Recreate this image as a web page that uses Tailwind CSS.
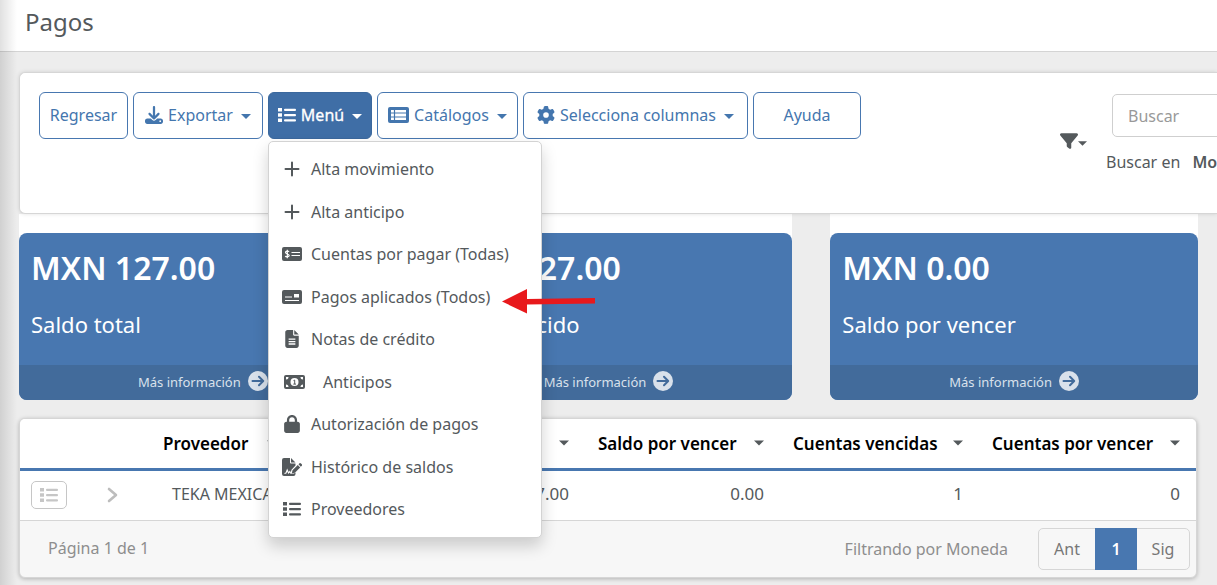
<!DOCTYPE html>
<html lang="es">
<head>
<meta charset="utf-8">
<title>Pagos</title>
<script src="https://cdn.jsdelivr.net/npm/@tailwindcss/browser@4"></script>
</head>
<body class="relative min-h-screen overflow-hidden bg-[#ededed] font-['Noto_Sans',sans-serif] text-[16px] leading-normal text-[#54595c]">

<svg class="hidden" aria-hidden="true">
  <symbol id="list" viewBox="0 0 18 16"><path d="M0 1h4v3.500H0zM0 6.300h4v3.500H0zM0 11.600h4v3.500H0z"/><rect x="6" y="1.700" width="12" height="2.200" rx="1"/><rect x="6" y="7" width="12" height="2.200" rx="1"/><rect x="6" y="12.300" width="12" height="2.200" rx="1"/></symbol>
  <symbol id="plus" viewBox="0 0 16 16"><path d="M8 1.500v13M1.500 8h13" fill="none" stroke="currentColor" stroke-width="2" stroke-linecap="round"/></symbol>
  <symbol id="caret" viewBox="0 0 10 5"><path d="M0 0h10L5 5z"/></symbol>
  <symbol id="go" viewBox="0 0 20 20"><circle cx="10" cy="10" r="10"/><path d="M4.500 10h10.500M11 5.800l4.200 4.200L11 14.200" fill="none" stroke="#426b9b" stroke-width="2" stroke-linecap="round" stroke-linejoin="round"/></symbol>
</svg>

<header class="h-[52px] border-b border-[#d4d4d4] bg-white px-[25px] pt-[4px]">
  <h1 class="text-[24px] leading-[36px]">Pagos</h1>
</header>

<main class="pl-[19px] pr-[19px] pt-5">
  <section class="relative z-10 -mr-[19px] flex h-[142px] items-start rounded-l-[6px] border border-r-0 border-[#d6d6d6] bg-white pl-[19px] pt-[19px] shadow-[0_0_4px_rgba(0,0,0,.12)]">
    <div class="flex gap-[5px] whitespace-nowrap text-[#4476ae]">
      <button class="h-[47px] w-[89px] rounded-[6px] border border-[#4877b0] bg-white pb-[2px]">Regresar</button>
      <button class="flex h-[47px] w-[130px] items-center justify-center gap-[5px] rounded-[6px] border border-[#4877b0] bg-white pb-[2px]">
        <svg class="size-[18px] fill-current" viewBox="0 0 512 512"><path d="M288 32c0-17.700-14.300-32-32-32s-32 14.300-32 32V274.700l-73.400-73.400c-12.500-12.500-32.800-12.500-45.300 0s-12.500 32.800 0 45.300l128 128c12.500 12.500 32.800 12.500 45.300 0l128-128c12.500-12.500 12.500-32.800 0-45.300s-32.800-12.500-45.300 0L288 274.700V32zM64 352c-35.300 0-64 28.700-64 64v32c0 35.300 28.700 64 64 64H448c35.300 0 64-28.700 64-64V416c0-35.300-28.700-64-64-64H346.500l-45.300 45.300c-25 25-65.500 25-90.500 0L165.500 352H64zm368 56a24 24 0 1 1 0 48 24 24 0 1 1 0-48z"/></svg>
        Exportar <svg class="ml-[3px] mt-[4px] h-[5px] w-[10px] fill-current"><use href="#caret"/></svg>
      </button>
      <div class="relative">
        <button aria-expanded="true" class="flex h-[47px] w-[104px] items-center justify-center gap-[5px] rounded-[6px] border border-[#3b689d] bg-[#3f6ea6] pb-[2px] text-white [-webkit-text-stroke:0.3px]">
          <svg class="h-[16px] w-[18px] fill-current"><use href="#list"/></svg>
          Menú <svg class="ml-[3px] mt-[4px] h-[5px] w-[10px] fill-current"><use href="#caret"/></svg>
        </button>
        <ul class="absolute left-0 top-[49px] flex h-[397px] w-[274px] flex-col justify-between rounded-[5px] border border-[#d3d3d3] bg-white pb-[7px] pt-[6px] text-[#54595c] shadow-[0_8px_16px_rgba(0,0,0,.18)]">
          <li><a href="#" class="flex h-[42px] items-center gap-[9px] px-[13px]"><svg class="h-[16px] w-[20px]"><use href="#plus"/></svg>Alta movimiento</a></li>
          <li><a href="#" class="flex h-[42px] items-center gap-[9px] px-[13px]"><svg class="h-[16px] w-[20px]"><use href="#plus"/></svg>Alta anticipo</a></li>
          <li><a href="#" class="flex h-[42px] items-center gap-[9px] px-[13px]"><svg class="h-[14px] w-[20px]" viewBox="0 0 20 14"><rect width="20" height="14" rx="2" fill="currentColor"/><path d="M7 4.800C6.500 4 3.500 3.800 3.500 5.400S7.200 6.900 7.200 8.600 3.800 10.100 3.200 9.200M5.300 2.700v8.600" fill="none" stroke="#fff" stroke-width="1.200"/><path d="M9.500 5.500H18M9.500 8.500H18" stroke="#fff" stroke-width="1.200"/></svg>Cuentas por pagar (Todas)</a></li>
          <li><a href="#" class="flex h-[42px] items-center gap-[9px] px-[13px]"><svg class="h-[14px] w-[20px]" viewBox="0 0 20 14"><rect width="20" height="14" rx="2" fill="currentColor"/><path d="M3 7h7M3 10.500h14" stroke="#fff" stroke-width="1.200"/><path d="M12 4h5v3.500h-5z" fill="#fff"/></svg>Pagos aplicados (Todos)</a></li>
          <li><a href="#" class="flex h-[42px] items-center gap-[9px] px-[13px]"><svg class="h-[18px] w-[20px] fill-current" viewBox="0 0 384 512"><path fill-rule="evenodd" d="M64 0C28.700 0 0 28.700 0 64V448c0 35.300 28.700 64 64 64H320c35.300 0 64-28.700 64-64V160H256c-17.700 0-32-14.300-32-32V0H64zM256 0V128H384L256 0zM96 240H288v36H96zM96 310H288v36H96zM96 380H288v36H96z"/></svg>Notas de crédito</a></li>
          <li><a href="#" class="flex h-[42px] items-center gap-[18px] pl-[15px] pr-[13px]"><svg class="h-[14px] w-[21px]" viewBox="0 0 21 14"><rect width="21" height="14" rx="2" fill="currentColor"/><circle cx="10.500" cy="7" r="4" fill="#fff"/><path d="M9.500 5.600l1.200-.5v4M9.300 9.100h2.700" stroke="currentColor" fill="none"/><path d="M2 4.500V2h2.500A2.500 2.500 0 0 1 2 4.500M19 4.500V2h-2.500A2.500 2.500 0 0 0 19 4.500M2 9.500V12h2.500A2.500 2.500 0 0 0 2 9.500M19 9.500V12h-2.500A2.500 2.500 0 0 1 19 9.500" fill="#fff"/></svg>Anticipos</a></li>
          <li><a href="#" class="flex h-[42px] items-center gap-[9px] px-[13px]"><svg class="h-[18px] w-[20px] fill-current" viewBox="0 0 448 512"><path d="M144 144v48H304V144c0-44.200-35.800-80-80-80s-80 35.800-80 80zM80 192V144C80 64.500 144.500 0 224 0s144 64.500 144 144v48h16c35.300 0 64 28.700 64 64V448c0 35.300-28.700 64-64 64H64c-35.300 0-64-28.700-64-64V256c0-35.300 28.700-64 64-64H80z"/></svg>Autorización de pagos</a></li>
          <li><a href="#" class="flex h-[42px] items-center gap-[9px] px-[13px]"><svg class="h-[18px] w-[20px]" viewBox="0 0 20 18"><path d="M2 0h6v4.500a1 1 0 0 0 1 1h4.500v2L9.500 11.700l-1 3.800h3.500l1.500-1V16a2 2 0 0 1-2 2H2a2 2 0 0 1-2-2V2a2 2 0 0 1 2-2zM9 0l4.500 4.500H9z" fill="currentColor"/><path d="M2.500 15.500l1.500-.5 1.200-3 1.300 3 1.300-1.500.7 1.500h3" fill="none" stroke="#fff" stroke-width="1.100"/><path d="M10.500 12.300l5.300-5.300 2.400 2.400-5.300 5.300-3.100.7zM16.500 6.300l1-1q.8-.5 1.500.2l.8.8q.6.700 0 1.400l-1 1z" fill="currentColor"/></svg>Histórico de saldos</a></li>
          <li><a href="#" class="flex h-[42px] items-center gap-[9px] px-[13px]"><svg class="h-[16px] w-[20px] fill-current"><use href="#list"/></svg>Proveedores</a></li>
        </ul>
      </div>
      <button class="flex h-[47px] w-[141px] items-center justify-center gap-[5px] rounded-[6px] border border-[#4877b0] bg-white pb-[2px]">
        <svg class="h-[16px] w-[21px]" viewBox="0 0 21 16"><rect width="21" height="16" rx="2" fill="currentColor"/><path d="M3 3h15v10H3z" fill="#fff"/><path d="M3 6h15M3 10h15M6.500 3v10" stroke="currentColor" stroke-width="1.200"/></svg>
        Catálogos <svg class="ml-[3px] mt-[4px] h-[5px] w-[10px] fill-current"><use href="#caret"/></svg>
      </button>
      <button class="flex h-[47px] w-[225px] items-center justify-center gap-[5px] rounded-[6px] border border-[#4877b0] bg-white pb-[2px]">
        <svg class="size-[18px] fill-current" viewBox="0 0 512 512"><path d="M495.900 166.600c3.200 8.700 .5 18.400-6.400 24.600l-43.300 39.400c1.100 8.300 1.700 16.800 1.700 25.400s-.6 17.100-1.700 25.400l43.300 39.400c6.900 6.200 9.600 15.900 6.400 24.600c-4.400 11.900-9.700 23.300-15.800 34.300l-4.700 8.100c-6.600 11-14 21.400-22.100 31.200c-5.900 7.200-15.700 9.600-24.500 6.800l-55.700-17.700c-13.400 10.300-28.200 18.900-44 25.400l-12.500 57.100c-2 9.100-9 16.300-18.200 17.800c-13.800 2.300-28 3.500-42.500 3.500s-28.700-1.200-42.500-3.500c-9.200-1.500-16.200-8.700-18.200-17.800l-12.500-57.100c-15.800-6.500-30.600-15.100-44-25.400L83.100 425.900c-8.800 2.800-18.600 .3-24.500-6.800c-8.100-9.800-15.500-20.200-22.100-31.200l-4.700-8.100c-6.100-11-11.400-22.400-15.800-34.300c-3.200-8.700-.5-18.400 6.400-24.600l43.300-39.400C64.600 273.100 64 264.600 64 256s.6-17.100 1.700-25.400L22.400 191.200c-6.900-6.200-9.600-15.900-6.400-24.600c4.400-11.900 9.700-23.300 15.800-34.300l4.700-8.100c6.600-11 14-21.400 22.100-31.200c5.900-7.200 15.700-9.600 24.500-6.800l55.700 17.700c13.400-10.300 28.200-18.900 44-25.400l12.500-57.100c2-9.100 9-16.300 18.200-17.800C227.300 1.200 241.500 0 256 0s28.700 1.200 42.500 3.500c9.200 1.500 16.200 8.700 18.200 17.800l12.500 57.100c15.800 6.500 30.600 15.100 44 25.400l55.700-17.700c8.800-2.800 18.600-.3 24.500 6.800c8.100 9.800 15.500 20.200 22.100 31.200l4.700 8.100c6.100 11 11.400 22.400 15.800 34.300zM256 336a80 80 0 1 0 0-160 80 80 0 1 0 0 160z"/></svg>
        Selecciona columnas <svg class="ml-[3px] mt-[4px] h-[5px] w-[10px] fill-current"><use href="#caret"/></svg>
      </button>
      <button class="h-[47px] w-[108px] rounded-[6px] border border-[#4877b0] bg-white pb-[2px]">Ayuda</button>
    </div>
    <div class="ml-auto flex w-[157px] shrink-0 overflow-hidden whitespace-nowrap">
      <button aria-label="Filtros" class="mt-[40px] flex h-[18px] shrink-0 items-center">
        <svg class="h-[18px] w-[18px] fill-current" viewBox="0 0 512 512"><path d="M3.900 54.900C10.500 40.900 24.500 32 40 32H472c15.500 0 29.500 8.900 36.100 22.900s4.600 30.500-5.200 42.500L320 320.900V448c0 12.100-6.800 23.200-17.700 28.600s-23.800 4.300-33.500-3l-64-48c-8.100-6-12.800-15.500-12.800-25.600V320.900L9 97.300C-.7 85.400-2.800 68.800 3.900 54.900z"/></svg>
        <svg class="mt-[4px] h-[5px] w-[9px] fill-current"><use href="#caret"/></svg>
      </button>
      <div class="ml-[19px] mt-[2px] shrink-0">
        <input type="search" aria-label="Buscar" placeholder="Buscar" class="ml-[6px] block h-[43px] w-[240px] rounded-[5px] border border-[#cfcfcf] bg-white px-[15px] placeholder:text-[#999]">
        <p class="mt-[13px]">Buscar en <strong class="ml-[8px] font-semibold">Moneda</strong></p>
      </div>
    </div>
  </section>

  <section class="grid grid-cols-3 gap-x-[38px] text-white">
    <article class="rounded-b-[8px] bg-white pt-[19px]">
      <div class="overflow-hidden rounded-[8px] bg-[#4877b0]">
        <div class="h-[132px] px-[12px] pt-[11px]"><h2 class="text-[32px] font-semibold leading-[48px]">MXN 127.00</h2><p class="mt-[16px] text-[22px] leading-[32px]">Saldo total</p></div>
        <a href="#" class="flex h-[35px] items-center justify-center gap-[7px] bg-[#426b9b] text-[13px] text-[#d9e1eb]">Más información <svg class="size-[20px] -mt-[4px] fill-current"><use href="#go"/></svg></a>
      </div>
    </article>
    <article class="rounded-b-[8px] bg-white pt-[19px]">
      <div class="overflow-hidden rounded-[8px] bg-[#4877b0]">
        <div class="h-[132px] px-[12px] pt-[11px]"><h2 class="text-[32px] font-semibold leading-[48px]">MXN 127.00</h2><p class="mt-[16px] text-[22px] leading-[32px]">Saldo vencido</p></div>
        <a href="#" class="flex h-[35px] items-center justify-center gap-[7px] bg-[#426b9b] text-[13px] text-[#d9e1eb]">Más información <svg class="size-[20px] -mt-[4px] fill-current"><use href="#go"/></svg></a>
      </div>
    </article>
    <article class="rounded-b-[8px] bg-white pt-[19px]">
      <div class="overflow-hidden rounded-[8px] bg-[#4877b0]">
        <div class="h-[132px] px-[12px] pt-[11px]"><h2 class="text-[32px] font-semibold leading-[48px]">MXN 0.00</h2><p class="mt-[16px] text-[22px] leading-[32px]">Saldo por vencer</p></div>
        <a href="#" class="flex h-[35px] items-center justify-center gap-[7px] bg-[#426b9b] text-[13px] text-[#d9e1eb]">Más información <svg class="size-[20px] -mt-[4px] fill-current"><use href="#go"/></svg></a>
      </div>
    </article>
  </section>

  <section class="mr-px mt-[18px] overflow-hidden rounded-[6px] border border-[#d6d6d6] bg-[#f7f7f7] shadow-[0_1px_4px_rgba(0,0,0,.25)]">
    <table class="w-full table-fixed bg-white text-[17px]">
      <colgroup><col class="w-[60px]"><col class="w-[70px]"><col class="w-[136px]"><col class="w-[140px]"><col><col class="w-[195px]"><col class="w-[199px]"><col class="w-[217px]"></colgroup>
      <thead>
        <tr class="h-[50px] border-b-[3px] border-[#4877b0] whitespace-nowrap text-black">
          <th></th><th></th>
          <th class="pl-[13px] pr-[9px] font-semibold"><span class="flex items-center justify-between">Proveedor <svg class="h-[6px] w-[10px] fill-[#54595c]"><use href="#caret"/></svg></span></th>
          <th class="pl-[13px] pr-4 font-semibold"><span class="flex items-center justify-between">Saldo total <svg class="h-[6px] w-[10px] fill-[#54595c]"><use href="#caret"/></svg></span></th>
          <th class="pl-[13px] pr-4 font-semibold"><span class="flex items-center justify-between">Vencido <svg class="h-[6px] w-[10px] fill-[#54595c]"><use href="#caret"/></svg></span></th>
          <th class="pl-[13px] pr-4 font-semibold"><span class="flex items-center justify-between">Saldo por vencer <svg class="h-[6px] w-[10px] fill-[#54595c]"><use href="#caret"/></svg></span></th>
          <th class="pl-[13px] pr-4 font-semibold"><span class="flex items-center justify-between">Cuentas vencidas <svg class="h-[6px] w-[10px] fill-[#54595c]"><use href="#caret"/></svg></span></th>
          <th class="pl-[13px] pr-4 font-semibold"><span class="flex items-center justify-between">Cuentas por vencer <svg class="h-[6px] w-[10px] fill-[#54595c]"><use href="#caret"/></svg></span></th>
        </tr>
      </thead>
      <tbody>
        <tr class="h-[51px] border-b border-[#d6d6d6] whitespace-nowrap">
          <td class="pl-[11px]"><button aria-label="Acciones" class="flex h-[28px] w-[36px] items-center justify-center rounded-[5px] border border-[#c6c6c6] text-[#c6c6c6]"><svg class="h-[16px] w-[18px] fill-current"><use href="#list"/></svg></button></td>
          <td><button aria-label="Expandir" class="ml-[27px] block text-[#bdbdbd]"><svg class="h-[16px] w-[11px]" viewBox="0 0 11 16" fill="none" stroke="currentColor" stroke-width="2.600" stroke-linecap="round" stroke-linejoin="round"><path d="M2 2l7 6-7 6"/></svg></button></td>
          <td class="overflow-hidden pb-[3px] pl-[22px] text-[16px]">TEKA MEXICANA</td>
          <td class="pb-[3px] pr-4 text-right">127.00</td>
          <td class="pb-[3px] pr-4 text-right">127.00</td>
          <td class="pb-[3px] pr-4 text-right">0.00</td>
          <td class="pb-[3px] pr-4 text-right">1</td>
          <td class="pb-[3px] pr-4 text-right">0</td>
        </tr>
      </tbody>
    </table>
    <footer class="flex h-[56px] items-center pl-[28px] pr-[6px] text-[#8e8e8e]">
      <span class="pb-[2px]">Página 1 de 1</span>
      <span class="ml-auto mr-[30px]">Filtrando por Moneda</span>
      <nav class="flex h-[42px] rounded-[5px] border border-[#d6d6d6] text-[#777]">
        <button class="w-[56px]">Ant</button>
        <button aria-current="page" class="-my-px w-[42px] bg-[#4877b0] font-semibold text-white">1</button>
        <button class="w-[52px]">Sig</button>
      </nav>
    </footer>
  </section>
</main>

<div class="pointer-events-none absolute inset-y-0 left-0 z-20 w-[17px] bg-linear-to-r from-black/12 to-transparent"></div>
<svg class="pointer-events-none absolute left-[502px] top-[288px] z-20 h-[27px] w-[94px]" viewBox="0 0 94 27" aria-hidden="true"><path d="M0 13.500L25 1v10l68-1v5.500l-68 1V25.500z" fill="#e8191c"/></svg>
</body>
</html>
